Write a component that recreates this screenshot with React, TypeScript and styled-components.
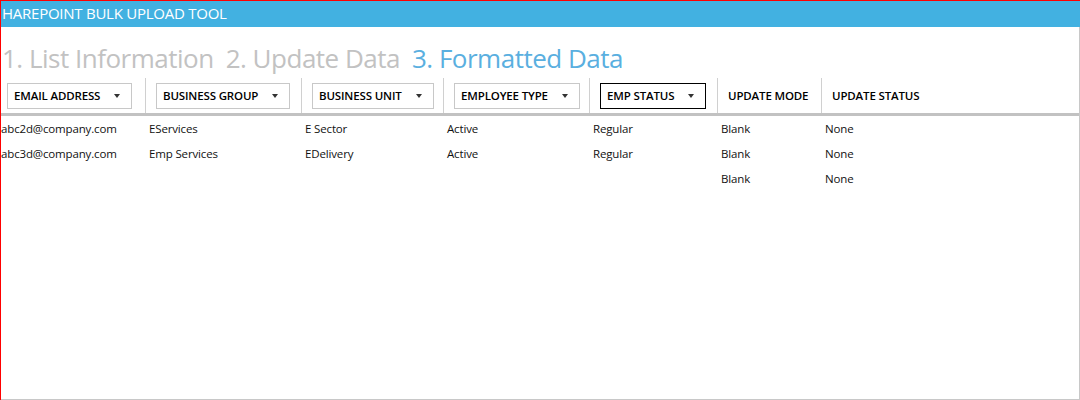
import React from "react";
import styled, { createGlobalStyle } from "styled-components";

const Global = createGlobalStyle`
  html, body { margin: 0; padding: 0; background: #fff; }
  body { font-family: "Open Sans", "Noto Sans", sans-serif; }
  * { box-sizing: border-box; }
`;

const Frame = styled.div`
  width: 1080px;
  height: 400px;
  border-top: 1px solid #ff0000;
  border-left: 1px solid #ff0000;
  display: flex;
  flex-direction: column;
  overflow: hidden;
`;

const TitleBar = styled.div`
  height: 26px;
  background: #42b1e1;
  color: #fff;
  font-size: 15px;
  line-height: 25px;
  padding-left: 1px;
  letter-spacing: -0.25px;
  white-space: nowrap;
`;

const Body = styled.div`
  flex: 1;
  border-right: 1px solid #c8c8c8;
  border-bottom: 1px solid #c8c8c8;
  display: flex;
  flex-direction: column;
`;

const Steps = styled.div`
  display: flex;
  gap: 12px;
  padding: 14px 0 0 1px;
  height: 51px;
  font-size: 26px;
  font-weight: 400;
  letter-spacing: -0.5px;
  white-space: nowrap;
`;

const Step = styled.span<{ $active?: boolean }>`
  color: ${(p) => (p.$active ? "#5aafe0" : "#c2c2c2")};
  line-height: 34px;
`;

const HeaderRow = styled.div`
  display: flex;
  height: 38px;
  border-bottom: 3px solid #c2c2c2;
`;

const HeaderCell = styled.div<{ $w: number; $first?: boolean }>`
  width: ${(p) => p.$w}px;
  flex: none;
  display: flex;
  align-items: center;
  padding-left: ${(p) => (p.$first ? 6 : 10)}px;
  border-left: ${(p) => (p.$first ? "none" : "1px solid #d0d0d0")};
`;

const LastHeaderCell = styled(HeaderCell)`
  flex: 1;
`;

const Dropdown = styled.div<{ $focused?: boolean }>`
  height: 26px;
  display: flex;
  align-items: center;
  gap: 14px;
  padding: 0 11px 0 6px;
  border: 1px solid ${(p) => (p.$focused ? "#000" : "#c8c8c8")};
  background: #fff;
`;

const Label = styled.span`
  font-size: 11.5px;
  font-weight: 600;
  color: #000;
  letter-spacing: -0.15px;
  white-space: nowrap;
`;

const Arrow = styled.span`
  width: 0;
  height: 0;
  border-left: 3px solid transparent;
  border-right: 3px solid transparent;
  border-top: 4px solid #333;
`;

const Rows = styled.div`
  display: flex;
  flex-direction: column;
`;

const Row = styled.div`
  display: flex;
  height: 25px;
  align-items: center;
`;

const Cell = styled.div<{ $w: number; $first?: boolean }>`
  width: ${(p) => p.$w}px;
  flex: none;
  padding-left: ${(p) => (p.$first ? 0 : 4)}px;
  font-size: 11.5px;
  color: #111;
  letter-spacing: -0.15px;
  white-space: nowrap;
`;

const widths = [144, 156, 142, 146, 128, 104];

const columns = [
  { label: "EMAIL ADDRESS", drop: true },
  { label: "BUSINESS GROUP", drop: true },
  { label: "BUSINESS UNIT", drop: true },
  { label: "EMPLOYEE TYPE", drop: true },
  { label: "EMP STATUS", drop: true, focused: true },
  { label: "UPDATE MODE", drop: false },
];

const data = [
  ["abc2d@company.com", "EServices", "E Sector", "Active", "Regular", "Blank", "None"],
  ["abc3d@company.com", "Emp Services", "EDelivery", "Active", "Regular", "Blank", "None"],
  ["", "", "", "", "", "Blank", "None"],
];

export default function App() {
  return (
    <>
      <Global />
      <Frame>
        <TitleBar>HAREPOINT BULK UPLOAD TOOL</TitleBar>
        <Body>
          <Steps>
            <Step>1. List Information</Step>
            <Step>2. Update Data</Step>
            <Step $active>3. Formatted Data</Step>
          </Steps>
          <HeaderRow>
            {columns.map((c, i) => (
              <HeaderCell key={c.label} $w={widths[i]} $first={i === 0}>
                {c.drop ? (
                  <Dropdown $focused={c.focused}>
                    <Label>{c.label}</Label>
                    <Arrow />
                  </Dropdown>
                ) : (
                  <Label>{c.label}</Label>
                )}
              </HeaderCell>
            ))}
            <LastHeaderCell $w={0}>
              <Label>UPDATE STATUS</Label>
            </LastHeaderCell>
          </HeaderRow>
          <Rows>
            {data.map((r, ri) => (
              <Row key={ri}>
                {r.map((v, ci) => (
                  <Cell key={ci} $w={ci < widths.length ? widths[ci] : 200} $first={ci === 0}>
                    {v}
                  </Cell>
                ))}
              </Row>
            ))}
          </Rows>
        </Body>
      </Frame>
    </>
  );
}
